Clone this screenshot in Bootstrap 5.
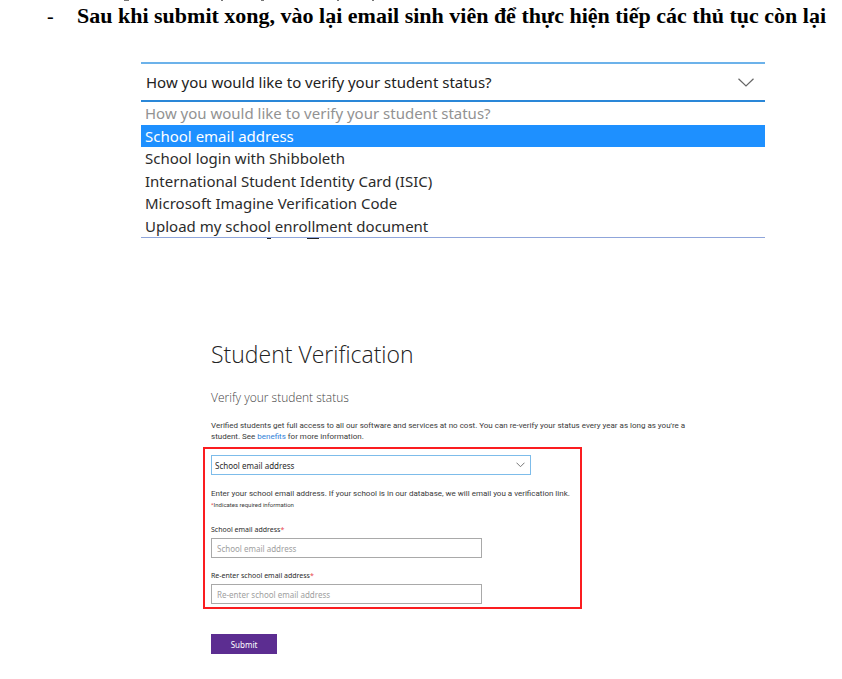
<!DOCTYPE html>
<html lang="vi">
<head>
<meta charset="utf-8">
<meta name="viewport" content="width=device-width, initial-scale=1">
<title>Student Verification</title>
<link href="https://cdn.jsdelivr.net/npm/bootstrap@5.3.0/dist/css/bootstrap.min.css" rel="stylesheet">
<style>
body { font-family: "Noto Sans", "Open Sans", sans-serif; color: #2b2b2b; background: #fff; }
.step-note { font: bold 22px/24px "Liberation Serif", serif; color: #000; padding: 4px 0 0 47px; }
.step-dash { width: 30px; font-weight: 400; font-size: 20px; }
.line-tails { top: 0; left: 120px; }
.list-tails { top: 100%; left: 124px; }
.method-picker { margin: 34px 77px 0 141px; font-size: 15px; }
.method-field { border-top: 2px solid #6cb2ea; border-bottom: 2px solid #2a87d8; }
.method-field select { height: 36px; font-size: 15px; padding: 0 0 0 5px; appearance: none; color: #222; }
.chevron { pointer-events: none; right: 11px; }
.method-list { min-height: 136px; border-bottom: 1px solid #8fa5da; }
.method-list button { padding: 0 4px; line-height: 22px; color: #2b2b2b; }
.method-list button:disabled { color: #929292; }
.method-list .chosen { background: #1e90ff; color: #fff; }
.verify { margin: 100px 142px 0 203px; font-size: 8px; line-height: 11px; }
.verify p { font-family: Roboto, sans-serif; color: #3a3a3a; }
.inset { padding-left: 8px; }
.verify h1 { font: 300 23px/32px "Open Sans", sans-serif; color: #222; margin: 0 0 18px; }
.verify h2 { font: 300 12px/20px "Open Sans", sans-serif; color: #444; margin: 0 0 12px; }
.verify a { color: #2f80d8; text-decoration: none; }
.intro { max-width: 484px; }
.marked { border: 2px solid #fb1d20; max-width: 379px; padding: 6px 0 3px 6px; margin-top: 5px; }
.school-method { max-width: 320px; }
.school-method select { height: 20px; font-size: 8px; border: 1px solid #7dbcea; border-radius: 0; padding: 0 3px; appearance: none; color: #2b2b2b; background: #fff; }
.school-method .chevron { right: 6px; }
.hint { margin: 13px 0 0; }
.tiny { font-size: 6px; margin: 0 0 14px; }
.label-text { font-size: 7px; line-height: 11px; margin-bottom: 3px; }
.mail-box + .label-text { margin-top: 12px; }
.req { color: #e8474c; }
.mail-box { height: 20px; max-width: 271px; border: 1px solid #a9a9a9; font-size: 8px; padding: 0 5px; }
.mail-box::placeholder { color: #a0a0a0; opacity: 1; }
.send { background: #5c2d91; color: #fff; border: 0; width: 66px; height: 20px; font-size: 8px; margin: 25px 0 0 8px; }
</style>
<script src="https://cdn.jsdelivr.net/npm/bootstrap@5.3.0/dist/js/bootstrap.bundle.min.js"></script>
</head>
<body>
<main>
  <div class="step-note d-flex position-relative">
    <svg class="line-tails position-absolute" width="260" height="1" viewBox="0 0 260 1" fill="#777" aria-hidden="true"><path d="M4 0h5v1H4zM101 0h2v1h-2zM141 0h3v1h-3zM217 0h2v1h-2zM252 0h2v1h-2z"/></svg>
    <span class="step-dash">-</span><span>Sau khi submit xong, vào lại email sinh viên để thực hiện tiếp các thủ tục còn lại</span>
  </div>

  <section class="method-picker">
    <div class="method-field position-relative d-flex align-items-center">
      <select class="w-100 border-0 bg-transparent" aria-label="Verification method"><option>How you would like to verify your student status?</option></select>
      <svg class="chevron position-absolute" width="16" height="9" viewBox="0 0 16 9" fill="none" stroke="#666" stroke-width="1.2"><path d="M.5.7 8 8 15.500.7"/></svg>
    </div>
    <div class="method-list position-relative d-flex flex-column" role="listbox" aria-label="Verification methods">
      <button class="flex-fill border-0 bg-transparent text-start" role="option" disabled>How you would like to verify your student status?</button>
      <button class="flex-fill border-0 text-start chosen" role="option" aria-selected="true">School email address</button>
      <button class="flex-fill border-0 bg-transparent text-start" role="option">School login with Shibboleth</button>
      <button class="flex-fill border-0 bg-transparent text-start" role="option">International Student Identity Card (ISIC)</button>
      <button class="flex-fill border-0 bg-transparent text-start" role="option">Microsoft Imagine Verification Code</button>
      <button class="flex-fill border-0 bg-transparent text-start" role="option">Upload my school enrollment document</button>
      <svg class="list-tails position-absolute" width="60" height="2" viewBox="0 0 60 2" fill="#222" aria-hidden="true"><path d="M2 1h4v1H2zM42 1h12v1H42z"/></svg>
    </div>
  </section>

  <form class="verify">
    <div class="inset">
      <h1>Student Verification</h1>
      <h2>Verify your student status</h2>
      <p class="intro mb-0">Verified students get full access to all our software and services at no cost. You can re-verify your status every year as long as you're a student. See <a href="#">benefits</a> for more information.</p>
    </div>
    <div class="marked">
      <div class="school-method position-relative d-flex align-items-center">
        <select class="w-100" aria-label="Selected method"><option>School email address</option></select>
        <svg class="chevron position-absolute" width="9" height="6" viewBox="0 0 9 6" fill="none" stroke="#777"><path d="M.5.7 4.500 4.700 8.500.7"/></svg>
      </div>
      <p class="hint">Enter your school email address. If your school is in our database, we will email you a verification link.</p>
      <p class="tiny"><span class="req">*</span>Indicates required information</p>
      <label class="label-text d-block" for="mail">School email address<span class="req">*</span></label>
      <input class="mail-box w-100 d-block" id="mail" type="email" placeholder="School email address">
      <label class="label-text d-block" for="mail2">Re-enter school email address<span class="req">*</span></label>
      <input class="mail-box w-100 d-block" id="mail2" type="email" placeholder="Re-enter school email address">
    </div>
    <button class="send d-block" type="submit">Submit</button>
  </form>
</main>
</body>
</html>
